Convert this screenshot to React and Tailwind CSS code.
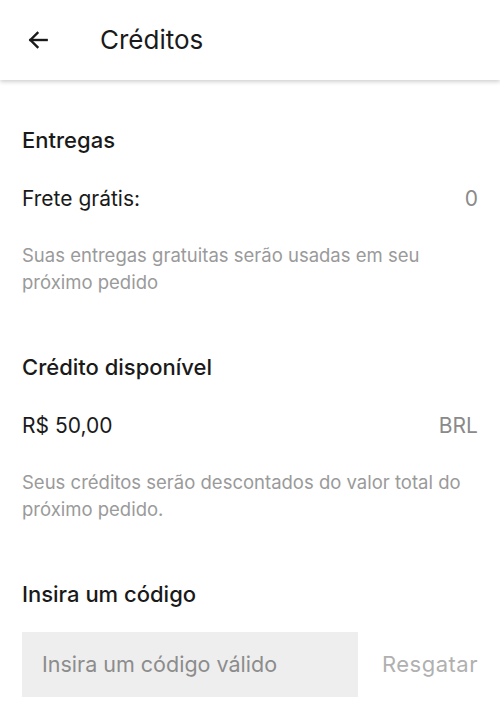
import React from 'react'

function BackArrow() {
    return (
        <svg width="26" height="26" viewBox="0 0 24 24" fill="none" stroke="#1a1a1a" strokeWidth="2.2" strokeLinecap="square">
            <path d="M20 12H5" />
            <path d="M11.5 5.5L5 12l6.5 6.5" />
        </svg>
    )
}

function App() {
    return (
        <div className="min-h-screen bg-white text-[#1a1a1a]" style={{ fontFamily: 'Inter, "Noto Sans", sans-serif' }}>
            {/* Header */}
            <div className="flex h-[80px] items-center shadow-[0_2px_4px_rgba(0,0,0,0.18)]">
                <div className="ml-[25px] flex w-[26px] items-center">
                    <BackArrow />
                </div>
                <h1 className="ml-[49px] text-[26px] leading-[32px] font-normal">Créditos</h1>
            </div>

            <div className="px-[22px]">
                {/* Entregas */}
                <h2 className="mt-[46px] text-[22px] leading-[28px] font-medium">Entregas</h2>
                <div className="mt-[31px] flex items-center justify-between text-[21px] leading-[28px]">
                    <span>Frete grátis:</span>
                    <span className="text-[#8a8a8a]">0</span>
                </div>
                <p className="mt-[29px] text-[18.5px] leading-[27px] text-[#9a9a9a]">
                    Suas entregas gratuitas serão usadas em seu próximo pedido
                </p>

                {/* Credito */}
                <h2 className="mt-[57px] text-[22px] leading-[28px] font-medium">Crédito disponível</h2>
                <div className="mt-[31px] flex items-center justify-between text-[21px] leading-[28px]">
                    <span>R$ 50,00</span>
                    <span className="text-[#8a8a8a]">BRL</span>
                </div>
                <p className="mt-[29px] text-[18.5px] leading-[27px] text-[#9a9a9a]">
                    Seus créditos serão descontados do valor total do próximo pedido.
                </p>

                {/* Codigo */}
                <h2 className="mt-[57px] text-[22px] leading-[28px] font-medium">Insira um código</h2>
                <div className="mt-[24px] flex items-center justify-between">
                    <div className="flex h-[65px] w-[336px] items-center bg-[#eeeeee] px-[20px] text-[21.5px] text-[#8c8c8c]">
                        Insira um código válido
                    </div>
                    <span className="text-[22px] tracking-[0.5px] text-[#b0b0b0]">Resgatar</span>
                </div>
            </div>
        </div>
    )
}

export default App
